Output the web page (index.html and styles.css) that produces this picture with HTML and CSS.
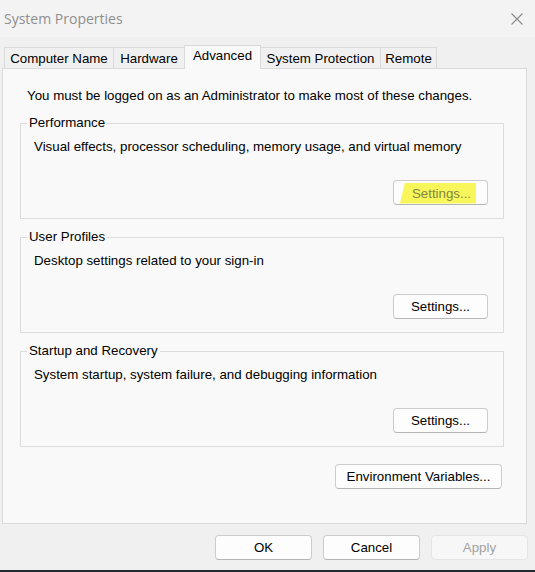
FILE: index.html
```html
<!DOCTYPE html>
<html>
<head>
<meta charset="utf-8">
<title>System Properties</title>
<link rel="stylesheet" href="styles.css">
</head>
<body>
<div class="window">
  <div class="titlebar">
    <span class="title">System Properties</span>
    <svg class="close" width="12" height="12" viewBox="0 0 12 12"><path d="M0.5 0.5 L11.5 11.5 M11.5 0.5 L0.5 11.5" stroke="#8a8a8a" stroke-width="1.1" fill="none"/></svg>
  </div>
  <div class="tabs">
    <div class="tab tab-cn">Computer Name</div>
    <div class="tab tab-hw">Hardware</div>
    <div class="tab tab-adv selected">Advanced</div>
    <div class="tab tab-sp">System Protection</div>
    <div class="tab tab-rm">Remote</div>
  </div>
  <div class="panel">
    <p class="info">You must be logged on as an Administrator to make most of these changes.</p>
    <fieldset class="group">
      <legend>Performance</legend>
      <p class="desc">Visual effects, processor scheduling, memory usage, and virtual memory</p>
      <div class="row"><button class="btn settings"><span class="hl">Settings...</span></button></div>
    </fieldset>
    <fieldset class="group">
      <legend>User Profiles</legend>
      <p class="desc">Desktop settings related to your sign-in</p>
      <div class="row"><button class="btn settings">Settings...</button></div>
    </fieldset>
    <fieldset class="group">
      <legend>Startup and Recovery</legend>
      <p class="desc">System startup, system failure, and debugging information</p>
      <div class="row"><button class="btn settings">Settings...</button></div>
    </fieldset>
    <div class="env-row"><button class="btn env">Environment Variables...</button></div>
  </div>
  <div class="footer">
    <button class="btn dlg">OK</button>
    <button class="btn dlg">Cancel</button>
    <button class="btn dlg disabled">Apply</button>
  </div>
  <div class="taskbar"></div>
</div>
</body>
</html>
```

FILE: styles.css
```css
html, body {
  margin: 0;
  padding: 0;
  background: #f0f0f0;
  width: 535px;
  height: 572px;
  overflow: hidden;
}

.window {
  display: flex;
  flex-direction: column;
  width: 535px;
  height: 572px;
  font-family: "Liberation Sans", Arial, sans-serif;
  font-size: 13.3px;
  color: #000;
}

.titlebar {
  height: 37px;
  flex: none;
  background: #f3f3f3;
  display: flex;
  align-items: center;
  justify-content: space-between;
  padding: 0 12px 0 4px;
  box-sizing: border-box;
}

.title {
  font-family: "Open Sans", "Noto Sans", sans-serif;
  font-size: 14px;
  color: #8f8f8f;
  margin-top: -1px;
}

.close {
  display: block;
}

.tabs {
  height: 31px;
  flex: none;
  display: flex;
  align-items: flex-end;
  padding-left: 4px;
  box-sizing: border-box;
}

.tab {
  height: 21px;
  box-sizing: border-box;
  border: 1px solid #dadada;
  border-bottom: none;
  border-right: none;
  padding: 0;
  text-align: center;
  white-space: nowrap;
  line-height: 21px;
  background: #f0f0f0;
}

.tab-cn { width: 109px; }
.tab-hw { width: 71px; }
.tab-adv { width: 77px; }
.tab-sp { width: 119px; }
.tab-rm { width: 57px; }

.tab:last-child {
  border-right: 1px solid #dadada;
}

.tab.selected {
  height: 24px;
  margin-bottom: -1px;
  border-right: 1px solid #dadada;
  background: #f9f9f9;
  line-height: 20px;
  z-index: 1;
}

.tab.selected + .tab {
  border-left: none;
}

.panel {
  margin-left: 2px;
  width: 525px;
  height: 456px;
  flex: none;
  box-sizing: border-box;
  border: 1px solid #dadada;
  background: #f9f9f9;
  padding-top: 19px;
}

.info {
  margin: 0;
  padding-left: 24px;
  line-height: 16px;
}

.group {
  margin: 10px 0 0 17px;
  width: 484px;
  box-sizing: border-box;
  border: 1px solid #dcdcdc;
  padding: 0 0 13px 0;
  min-width: 0;
}

.info + .group {
  margin-top: 11px;
}

.group legend {
  margin-left: 6px;
  padding: 0 2px;
  line-height: 16px;
}

.desc {
  margin: 8px 0 0 0;
  padding-left: 13px;
  line-height: 16px;
}

.row {
  display: flex;
  justify-content: flex-end;
  padding-right: 15px;
  margin-top: 25px;
}

.btn {
  font-family: "Liberation Sans", Arial, sans-serif;
  font-size: 13.3px;
  color: #000;
  height: 25px;
  box-sizing: border-box;
  border: 1px solid #cccccc;
  border-bottom-color: #b5b5b5;
  border-radius: 4px;
  background: #fdfdfd;
  padding: 0;
  margin: 0;
  display: flex;
  align-items: center;
  justify-content: center;
}

.settings {
  width: 95px;
}

.hl {
  display: block;
  background: #f7f75c;
  color: #85853f;
  padding: 3px 5px 3px 12px;
  margin-left: -5px;
  margin-top: 1px;
  clip-path: polygon(5px 0, 100% 0, 100% 100%, 0 100%);
}

.env-row {
  width: 484px;
  margin-left: 17px;
  margin-top: 17px;
  display: flex;
  justify-content: flex-end;
  padding-right: 2px;
  box-sizing: border-box;
}

.env {
  width: 167px;
}

.footer {
  display: flex;
  justify-content: flex-end;
  gap: 11px;
  padding: 11px 7px 0 0;
  height: 46px;
  box-sizing: border-box;
  flex: none;
}

.dlg {
  width: 97px;
}

.dlg.disabled {
  color: #a3a3a3;
  border-color: #e5e5e5;
  background: #f7f7f7;
}

.taskbar {
  height: 2px;
  flex: none;
  background: #1f2a32;
}
```
